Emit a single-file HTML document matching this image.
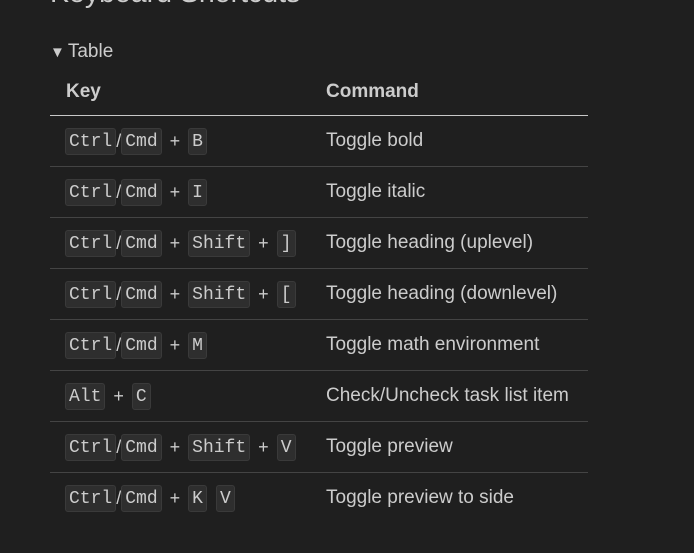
<!DOCTYPE html>
<html><head><meta charset="utf-8"><style>
body{margin:0;width:694px;height:553px;background:#1f1f1f;overflow:hidden;font-family:"Liberation Sans",sans-serif;color:#cccccc;position:relative}
h1{position:absolute;left:50px;top:-23px;margin:0;font-size:28.5px;font-weight:normal;color:#cccccc;white-space:nowrap}
.sum{position:absolute;left:50px;top:41px;font-size:19px}
.sum span{font-size:15px;margin-right:3px}
.hdr{position:absolute;top:81px;font-size:19px;font-weight:bold}
.hl{position:absolute;left:50px;width:538px;top:115px;height:1px;background:#c8c8c8}
.row{position:absolute;left:50px;width:538px;height:50px;border-bottom:1px solid #444}
.k{position:absolute;left:15px;top:12px;font-family:"Liberation Mono",monospace;font-size:18px;display:flex;align-items:center;white-space:pre}
.k b{font-weight:normal;background:#2e2e2e;border:1px solid #3a3a3a;border-radius:3px;padding:2px 3px 1px;line-height:22px}
.k i{font-style:normal;font-family:"Liberation Sans",sans-serif;font-size:18px}
.k i.p{padding:0 8px}
.k i.s{padding:0 2px}
.c{position:absolute;left:276px;top:14px;font-size:19px;white-space:nowrap}
</style></head><body>
<h1>Keyboard Shortcuts</h1>
<div class="sum"><span>▼</span>Table</div>
<div class="hdr" style="left:66px">Key</div>
<div class="hdr" style="left:326px">Command</div>
<div class="hl"></div>
<div class="row" style="top:116px"><div class="k"><b>Ctrl</b><i>/</i><b>Cmd</b><i class="p">+</i><b>B</b></div><div class="c">Toggle bold</div></div>
<div class="row" style="top:167px"><div class="k"><b>Ctrl</b><i>/</i><b>Cmd</b><i class="p">+</i><b>I</b></div><div class="c">Toggle italic</div></div>
<div class="row" style="top:218px"><div class="k"><b>Ctrl</b><i>/</i><b>Cmd</b><i class="p">+</i><b>Shift</b><i class="p">+</i><b>]</b></div><div class="c">Toggle heading (uplevel)</div></div>
<div class="row" style="top:269px"><div class="k"><b>Ctrl</b><i>/</i><b>Cmd</b><i class="p">+</i><b>Shift</b><i class="p">+</i><b>[</b></div><div class="c">Toggle heading (downlevel)</div></div>
<div class="row" style="top:320px"><div class="k"><b>Ctrl</b><i>/</i><b>Cmd</b><i class="p">+</i><b>M</b></div><div class="c">Toggle math environment</div></div>
<div class="row" style="top:371px"><div class="k"><b>Alt</b><i class="p">+</i><b>C</b></div><div class="c">Check/Uncheck task list item</div></div>
<div class="row" style="top:422px"><div class="k"><b>Ctrl</b><i>/</i><b>Cmd</b><i class="p">+</i><b>Shift</b><i class="p">+</i><b>V</b></div><div class="c">Toggle preview</div></div>
<div class="row" style="top:473px;border-bottom:none"><div class="k"><b>Ctrl</b><i>/</i><b>Cmd</b><i class="p">+</i><b>K</b><i class="s"> </i><b>V</b></div><div class="c">Toggle preview to side</div></div>
</body></html>
